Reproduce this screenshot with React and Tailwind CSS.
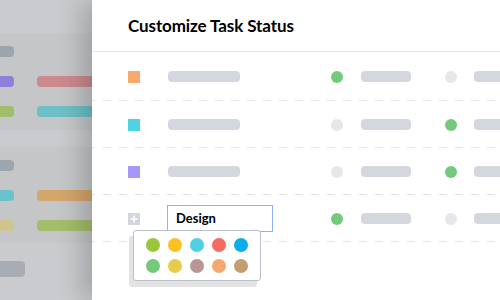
const dashed =
  "bg-[linear-gradient(to_right,#e3e3e3_8px,transparent_8px)] bg-[length:16px_1px] bg-repeat-x bg-bottom";

const rows = [
  { color: "bg-[#f8a96e]", first: true },
  { color: "bg-[#4fd2e2]", first: false },
  { color: "bg-[#a996f9]", first: false },
];

const swatches = [
  "bg-[#9ac63c]",
  "bg-[#fdc11f]",
  "bg-[#4fd1e1]",
  "bg-[#f46b60]",
  "bg-[#0badea]",
  "bg-[#73c97c]",
  "bg-[#e7cb4d]",
  "bg-[#b89692]",
  "bg-[#f5a772]",
  "bg-[#c39e70]",
];

function Dot({ on, className = "" }) {
  return (
    <span
      className={`block h-3 w-3 shrink-0 rounded-full ${on ? "bg-[#73c97c]" : "bg-[#e5e7eb]"} ${className}`}
    />
  );
}

function Tail({ first }) {
  return (
    <>
      <Dot on={first} />
      <span className="ml-[18px] h-[11px] w-[50px] shrink-0 rounded bg-[#d4d8de]" />
      <Dot on={!first} className="ml-[34px]" />
      <span className="ml-[17px] h-[11px] w-[40px] shrink-0 rounded bg-[#d4d8de]" />
    </>
  );
}

function ThumbRow({ left, right }) {
  return (
    <div className="flex h-[11px] items-center">
      <span className={`-ml-[10px] h-[11px] w-[24px] shrink-0 rounded ${left}`} />
      {right && <span className={`ml-[23px] h-[11px] w-[80px] shrink-0 rounded ${right}`} />}
    </div>
  );
}

export default function App() {
  return (
    <div className="flex h-[300px] w-[500px] overflow-hidden bg-white font-['Lato','Noto_Sans',sans-serif] text-black">
      {/* blurred board behind */}
      <aside className="flex w-[92px] shrink-0 flex-col overflow-hidden bg-[#c5c6c8] blur-[0.6px]">
        <div className="h-[33px] bg-[#cacbce]" />
        <div className="flex flex-col gap-[19px] py-[13px]">
          <ThumbRow left="bg-[#9ba5ad]" />
          <ThumbRow left="bg-[#8e7fd8]" right="bg-[#cd8a8d]" />
          <ThumbRow left="bg-[#a0bd68]" right="bg-[#6dc0c6]" />
        </div>
        <div className="h-[17px] bg-[#cacbce]" />
        <div className="flex flex-col gap-[19px] pt-[13px] pb-[12px]">
          <ThumbRow left="bg-[#9ca6ae]" />
          <ThumbRow left="bg-[#68c4ca]" right="bg-[#d3a66b]" />
          <ThumbRow left="bg-[#d1c48f]" right="bg-[#a3be6a]" />
        </div>
        <div className="flex-1 bg-[#cacbce] pt-[18px]">
          <span className="-ml-[10px] block h-4 w-[35px] rounded bg-[#a8adb3]" />
        </div>
      </aside>

      {/* modal panel */}
      <main className="relative z-10 flex-1 bg-white shadow-[-10px_0_24px_rgba(0,0,0,0.2)]">
        <header className="flex h-[52px] items-center border-b border-[#e4e4e4] pl-9">
          <h1 className="text-[17px] font-bold tracking-[-0.1px]">Customize Task Status</h1>
        </header>

        {rows.map((r, i) => (
          <div
            key={i}
            className={`flex items-center pl-9 ${dashed} ${i === 0 ? "h-[49px]" : "h-[47px]"}`}
          >
            <span className={`h-3 w-3 shrink-0 ${r.color}`} />
            <span className="ml-[28px] h-[11px] w-[72px] shrink-0 rounded bg-[#d4d8de]" />
            <span className="ml-[91px] flex items-center">
              <Tail first={r.first} />
            </span>
          </div>
        ))}

        {/* new status row */}
        <div className={`relative flex h-[47px] items-center pl-9 ${dashed}`}>
          <svg width="12" height="12" viewBox="0 0 12 12" className="shrink-0">
            <rect width="12" height="12" fill="#d3d7dd" />
            <path d="M6 2.5v7M2.5 6h7" stroke="#fff" strokeWidth="1.6" />
          </svg>
          <div className="ml-[27px] flex h-[27px] w-[106px] shrink-0 items-center border border-[#8ab4f6] pl-2 text-[13px] font-bold">
            Design
          </div>
          <span className="ml-[58px] flex items-center">
            <Tail first={true} />
          </span>

          {/* colour picker */}
          <div className="absolute left-[41px] top-[35px] grid grid-cols-5 gap-[7px] gap-x-2 rounded-[3px] border border-[#b9c0cb] bg-white px-3 py-[7px] shadow-[-4px_6px_0_#e3e3e3]">
            {swatches.map((s) => (
              <span key={s} className={`h-[14px] w-[14px] rounded-full ${s}`} />
            ))}
          </div>
        </div>
      </main>
    </div>
  );
}
